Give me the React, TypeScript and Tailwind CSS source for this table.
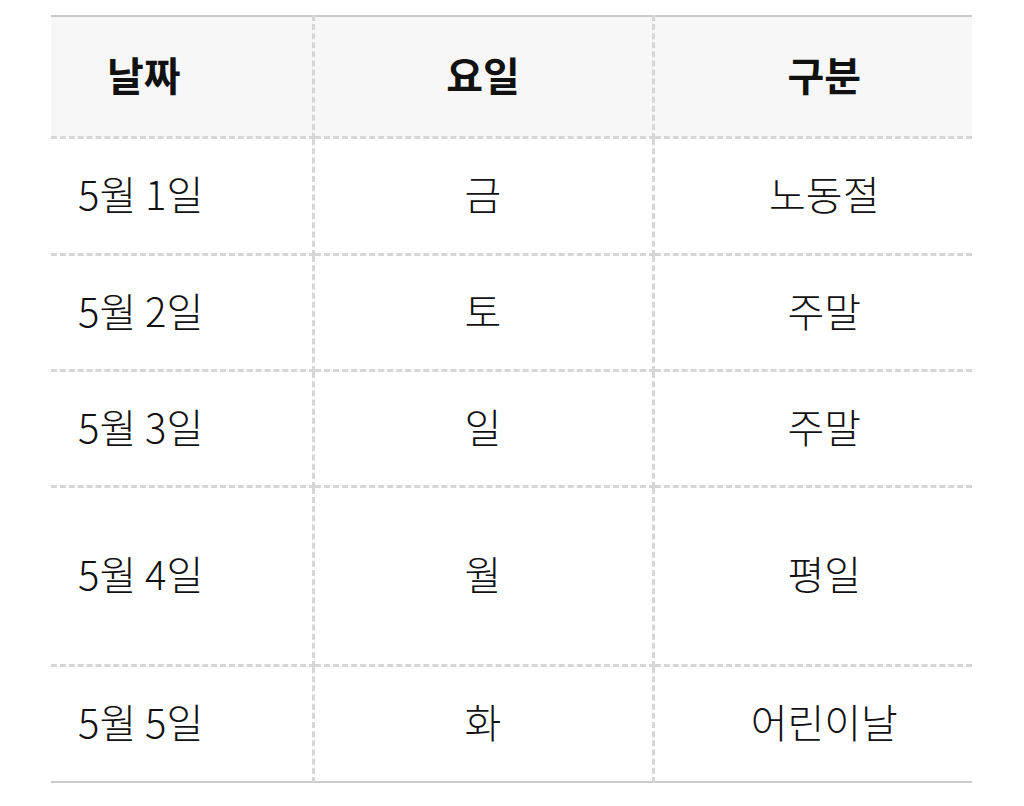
const rows = [
  { date: '5월 1일', day: '금', kind: '노동절', h: 'h-[117px]' },
  { date: '5월 2일', day: '토', kind: '주말', h: 'h-[116px]' },
  { date: '5월 3일', day: '일', kind: '주말', h: 'h-[116px]' },
  { date: '5월 4일', day: '월', kind: '평일', h: 'h-[179px]' },
  { date: '5월 5일', day: '화', kind: '어린이날', h: 'h-[117px]' },
]

const cell = 'border-[3px] border-dashed border-[#d6d6d6] align-middle pb-[5px]'

export default function App() {
  return (
    <div
      className="min-h-[806px] w-[1024px] bg-white pt-[15px] pl-[51px] text-[#111]"
      style={{ fontFamily: '"Noto Sans CJK KR", "Noto Sans", sans-serif' }}
    >
      <table className="w-[921px] border-collapse border-t-2 border-b-2 border-t-[#cbcbcb] border-b-[#cbcbcb] text-[40px] leading-none">
        <thead>
          <tr className="h-[121px] bg-[#f7f7f7] font-bold">
            <th className={`${cell} w-[262px] border-t-0 border-l-0 pl-[56px] text-left`}>날짜</th>
            <th className={`${cell} w-[340px] border-t-0 text-center`}>요일</th>
            <th className={`${cell} border-t-0 border-r-0 pl-[22px] text-center`}>구분</th>
          </tr>
        </thead>
        <tbody className="font-light">
          {rows.map((r, i) => (
            <tr key={r.date} className={r.h}>
              <td className={`${cell} border-l-0 pl-[27px] text-left ${i === rows.length - 1 ? 'border-b-0' : ''}`}>
                {r.date}
              </td>
              <td className={`${cell} text-center ${i === rows.length - 1 ? 'border-b-0' : ''}`}>{r.day}</td>
              <td className={`${cell} border-r-0 pl-[22px] text-center ${i === rows.length - 1 ? 'border-b-0' : ''}`}>
                {r.kind}
              </td>
            </tr>
          ))}
        </tbody>
      </table>
    </div>
  )
}
